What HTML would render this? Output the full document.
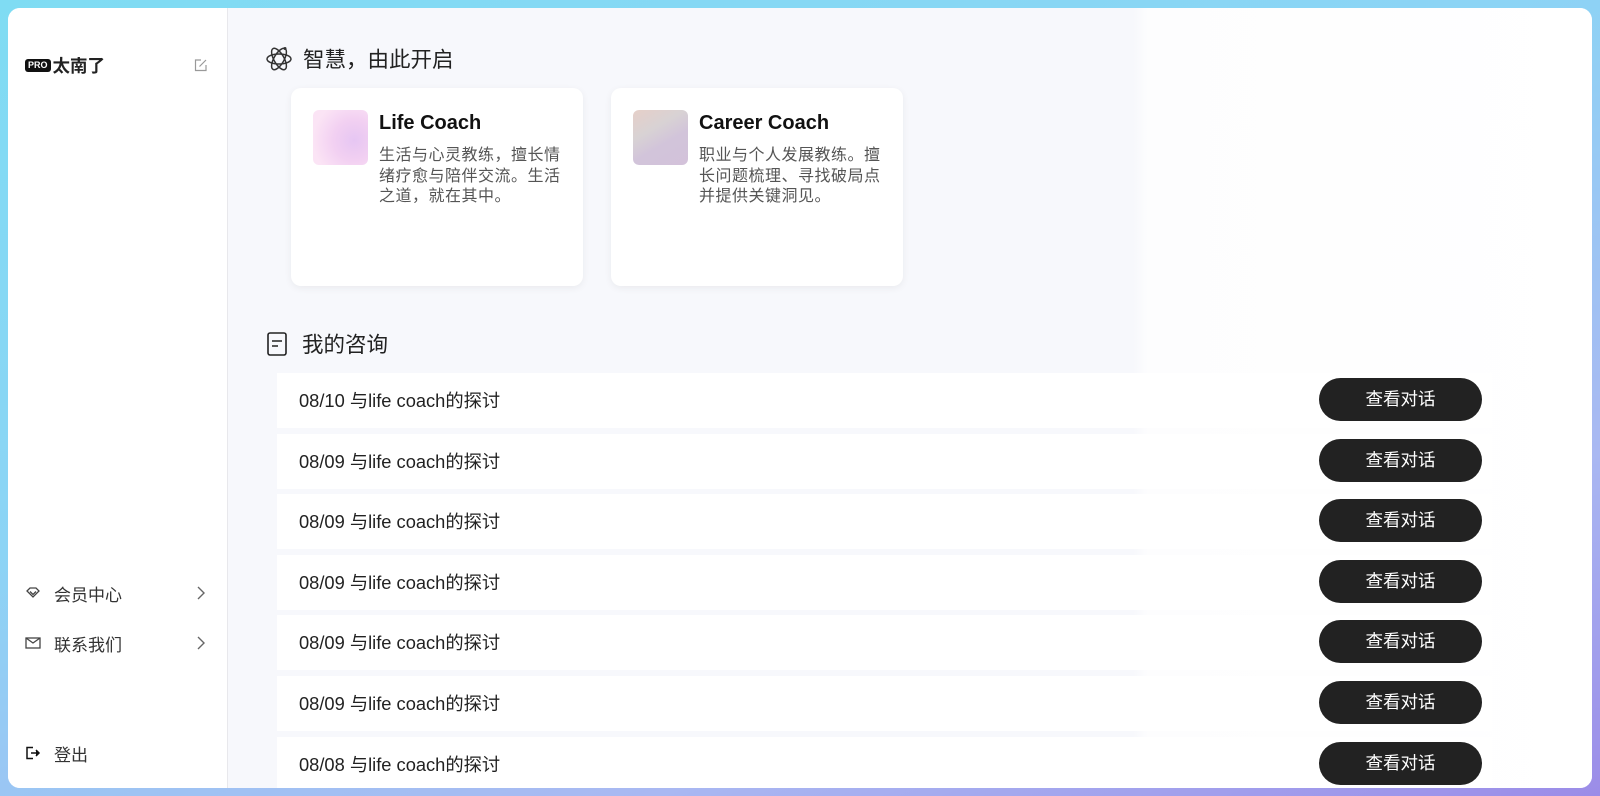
<!DOCTYPE html>
<html><head><meta charset="utf-8"><style>
*{margin:0;padding:0;box-sizing:border-box}
body{width:1600px;height:796px;overflow:hidden;font-family:"Liberation Sans","Noto Sans CJK SC",sans-serif;background:linear-gradient(160deg,#7fdcf3 0%,#8cd4f5 40%,#a9b8f2 75%,#9b8ce8 100%);position:relative}
.win{position:absolute;left:8px;top:8px;width:1584px;height:780px;border-radius:12px;overflow:hidden;background:#fff;display:flex}
.side{width:220px;border-right:1px solid #e8e8ec;background:#fff;position:relative;flex:none}
.main{flex:1;position:relative;background:linear-gradient(90deg,#f7f8fc 0,#f7f8fc 905px,#fdfdfe 920px,#fff 100%)}
.brand{position:absolute;left:17px;top:45px;font-size:17.5px;font-weight:bold;color:#222;display:flex;align-items:center}
.pro{background:#111;color:#fff;font-size:9px;border-radius:3px;padding:1px 3px;margin-right:2px;line-height:11px}
.edit{position:absolute;left:186px;top:50px}
.nav{position:absolute;left:17px;font-size:17px;color:#333;display:flex;align-items:center;width:181px;height:24px}
.nav svg{margin-right:13px}
.nav .ch{position:absolute;right:0;margin:0}
.h{position:absolute;font-size:21.5px;color:#222;display:flex;align-items:center}
.card{position:absolute;top:80px;width:292px;height:198px;background:#fff;border-radius:10px;box-shadow:0 2px 8px rgba(0,0,0,.06)}
.card .img{position:absolute;left:22px;top:22px;width:55px;height:55px;border-radius:6px}
.card h3{position:absolute;left:88px;top:24px;font-size:20px;color:#111}
.card p{position:absolute;left:88px;top:58px;width:186px;font-size:16px;letter-spacing:0.5px;line-height:20.5px;color:#555}
.row{position:absolute;left:49px;width:1215px;height:55px;background:#fff;font-size:18.3px;color:#222;line-height:55px;padding-left:22px}
.btn{position:absolute;left:1042px;top:5px;width:163px;height:43px;border-radius:22px;background:#222;color:#fff;font-size:17.5px;text-align:center;line-height:43px;padding:0}
</style></head><body>
<div class="win">
<div class="side">
<div class="brand"><span class="pro">PRO</span>太南了</div>
<svg class="edit" width="14" height="14" viewBox="0 0 14 14" fill="none" stroke="#999" stroke-width="1.2"><path d="M12 7v5.5H1.5V2H7"/><path d="M5.5 8.5 12 2"/></svg>
<div class="nav" style="top:573px"><svg width="16" height="14" viewBox="0 0 16 14" fill="none" stroke="#444" stroke-width="1.3"><path d="M2 5 5 2h6l3 3-6 6z"/><path d="M5 5.5l3 3 3-3"/></svg>会员中心<svg class="ch" width="10" height="16" viewBox="0 0 10 16" fill="none" stroke="#666" stroke-width="1.4"><path d="M2 2l6 6-6 6"/></svg></div>
<div class="nav" style="top:623px"><svg width="16" height="14" viewBox="0 0 16 14" fill="none" stroke="#444" stroke-width="1.3"><rect x="1" y="2" width="14" height="10"/><path d="M1 2l7 5 7-5"/></svg>联系我们<svg class="ch" width="10" height="16" viewBox="0 0 10 16" fill="none" stroke="#666" stroke-width="1.4"><path d="M2 2l6 6-6 6"/></svg></div>
<div class="nav" style="top:733px"><svg width="16" height="14" viewBox="0 0 16 14" fill="none" stroke="#111" stroke-width="1.5"><path d="M8 1.5H2v11h6"/><path d="M6 7h8M11 4l3 3-3 3" fill="#111"/></svg>登出</div>
</div>
<div class="main">
<div class="h" style="left:37px;top:35px"><svg width="28" height="28" viewBox="0 0 28 28" fill="none" stroke="#333" stroke-width="1.5"><ellipse cx="14" cy="14" rx="12" ry="5"/><ellipse cx="14" cy="14" rx="12" ry="5" transform="rotate(60 14 14)"/><ellipse cx="14" cy="14" rx="12" ry="5" transform="rotate(-60 14 14)"/><circle cx="20" cy="3.5" r="1.5" fill="#333" stroke="none"/></svg><span style="margin-left:10px">智慧，由此开启</span></div>
<div class="card" style="left:63px"><div class="img" style="background:radial-gradient(circle at 75% 55%,#e6c6f3 0,#f2d0f2 40%,#fbe4f5 80%)"></div><h3>Life Coach</h3><p>生活与心灵教练，擅长情绪疗愈与陪伴交流。生活之道，就在其中。</p></div>
<div class="card" style="left:383px"><div class="img" style="background:linear-gradient(150deg,#e6cfc8 0,#d8d2d4 35%,#d2c4da 60%,#d3c2da 100%)"></div><h3>Career Coach</h3><p>职业与个人发展教练。擅长问题梳理、寻找破局点并提供关键洞见。</p></div>
<div class="h" style="left:38px;top:320px"><svg width="22" height="26" viewBox="0 0 22 26" fill="none" stroke="#222" stroke-width="1.6"><rect x="2" y="2" width="18" height="22" rx="2"/><path d="M6 10h10M6 15h6"/></svg><span style="margin-left:14px">我的咨询</span></div>
<div class="row" style="top:365px">08/10 与life coach的探讨<div class="btn">查看对话</div></div>
<div class="row" style="top:426px">08/09 与life coach的探讨<div class="btn">查看对话</div></div>
<div class="row" style="top:486px">08/09 与life coach的探讨<div class="btn">查看对话</div></div>
<div class="row" style="top:547px">08/09 与life coach的探讨<div class="btn">查看对话</div></div>
<div class="row" style="top:607px">08/09 与life coach的探讨<div class="btn">查看对话</div></div>
<div class="row" style="top:668px">08/09 与life coach的探讨<div class="btn">查看对话</div></div>
<div class="row" style="top:729px">08/08 与life coach的探讨<div class="btn">查看对话</div></div>
</div>
</div>
</body></html>
